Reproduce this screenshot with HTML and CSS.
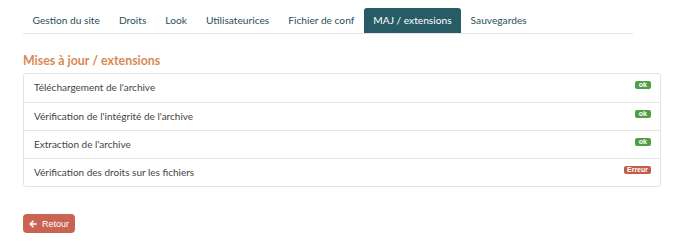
FILE: index.html
```html
<!DOCTYPE html>
<html lang="fr">
<head>
    <meta charset="UTF-8">
    <title>MAJ / extensions</title>
    <link rel="stylesheet" href="styles.css">
</head>
<body>
    <div class="page">
        <ul class="tabs">
            <li><a href="#">Gestion du site</a></li>
            <li><a href="#">Droits</a></li>
            <li><a href="#">Look</a></li>
            <li><a href="#">Utilisateurices</a></li>
            <li><a href="#">Fichier de conf</a></li>
            <li class="active"><a href="#">MAJ / extensions</a></li>
            <li><a href="#">Sauvegardes</a></li>
        </ul>

        <h2 class="title">Mises à jour / extensions</h2>

        <ul class="steps">
            <li>Téléchargement de l'archive <span class="badge ok">ok</span></li>
            <li>Vérification de l'intégrité de l'archive <span class="badge ok">ok</span></li>
            <li>Extraction de l'archive <span class="badge ok">ok</span></li>
            <li>Vérification des droits sur les fichiers <span class="badge error">Erreur</span></li>
        </ul>

        <a href="#" class="back-btn">
            <svg width="8" height="8" viewBox="0 0 10 10"><path d="M9 5H2M5 1.5L1.5 5 5 8.5" fill="none" stroke="#fff" stroke-width="2" stroke-linecap="round" stroke-linejoin="round"/></svg>
            Retour
        </a>
    </div>
</body>
</html>
```

FILE: styles.css
```css
body {
    margin: 0;
    font-family: Lato, "Open Sans", sans-serif;
    background-color: #fff;
    color: #333;
}
.page {
    padding: 8px 29px 0 23px;
}
.tabs {
    list-style: none;
    margin: 0 28px 0 0;
    padding: 0;
    display: flex;
    border-bottom: 1px solid #e2e4e6;
}
.tabs li a {
    display: block;
    padding: 0 9.5px;
    height: 25px;
    line-height: 25px;
    font-size: 10.2px;
    color: #2a4f5a;
    text-decoration: none;
    border-radius: 3px 3px 0 0;
}
.tabs li.active a {
    background-color: #275b66;
    color: #fff;
}
.title {
    margin: 19px 0 5px;
    font-size: 12.4px;
    font-weight: bold;
    color: #d88a55;
}
.steps {
    list-style: none;
    margin: 0;
    padding: 0;
    border: 1px solid #e3e3e3;
    border-radius: 3px;
}
.steps li {
    position: relative;
    height: 27px;
    line-height: 27px;
    padding: 0 10px;
    font-size: 10px;
    color: #444;
    border-top: 1px solid #e6e6e6;
}
.steps li:first-child {
    border-top: none;
    height: 28px;
}
.badge {
    position: absolute;
    right: 9px;
    top: 7px;
    height: 8px;
    line-height: 8px;
    padding: 0 4px;
    font-family: "Liberation Sans", Arial, sans-serif;
    font-size: 7px;
    font-weight: bold;
    color: #fff;
    border-radius: 2px;
}
.badge.ok {
    background-color: #4e9f45;
}
.badge.error {
    padding: 0 3px;
    background-color: #c45c4a;
}
.back-btn {
    display: inline-flex;
    align-items: center;
    gap: 5px;
    margin-top: 27px;
    height: 19px;
    padding: 0 6px;
    background-color: #c96352;
    color: #fff;
    border-radius: 4px;
    font-family: "Liberation Sans", Arial, sans-serif;
    font-size: 9px;
    text-decoration: none;
}
```
